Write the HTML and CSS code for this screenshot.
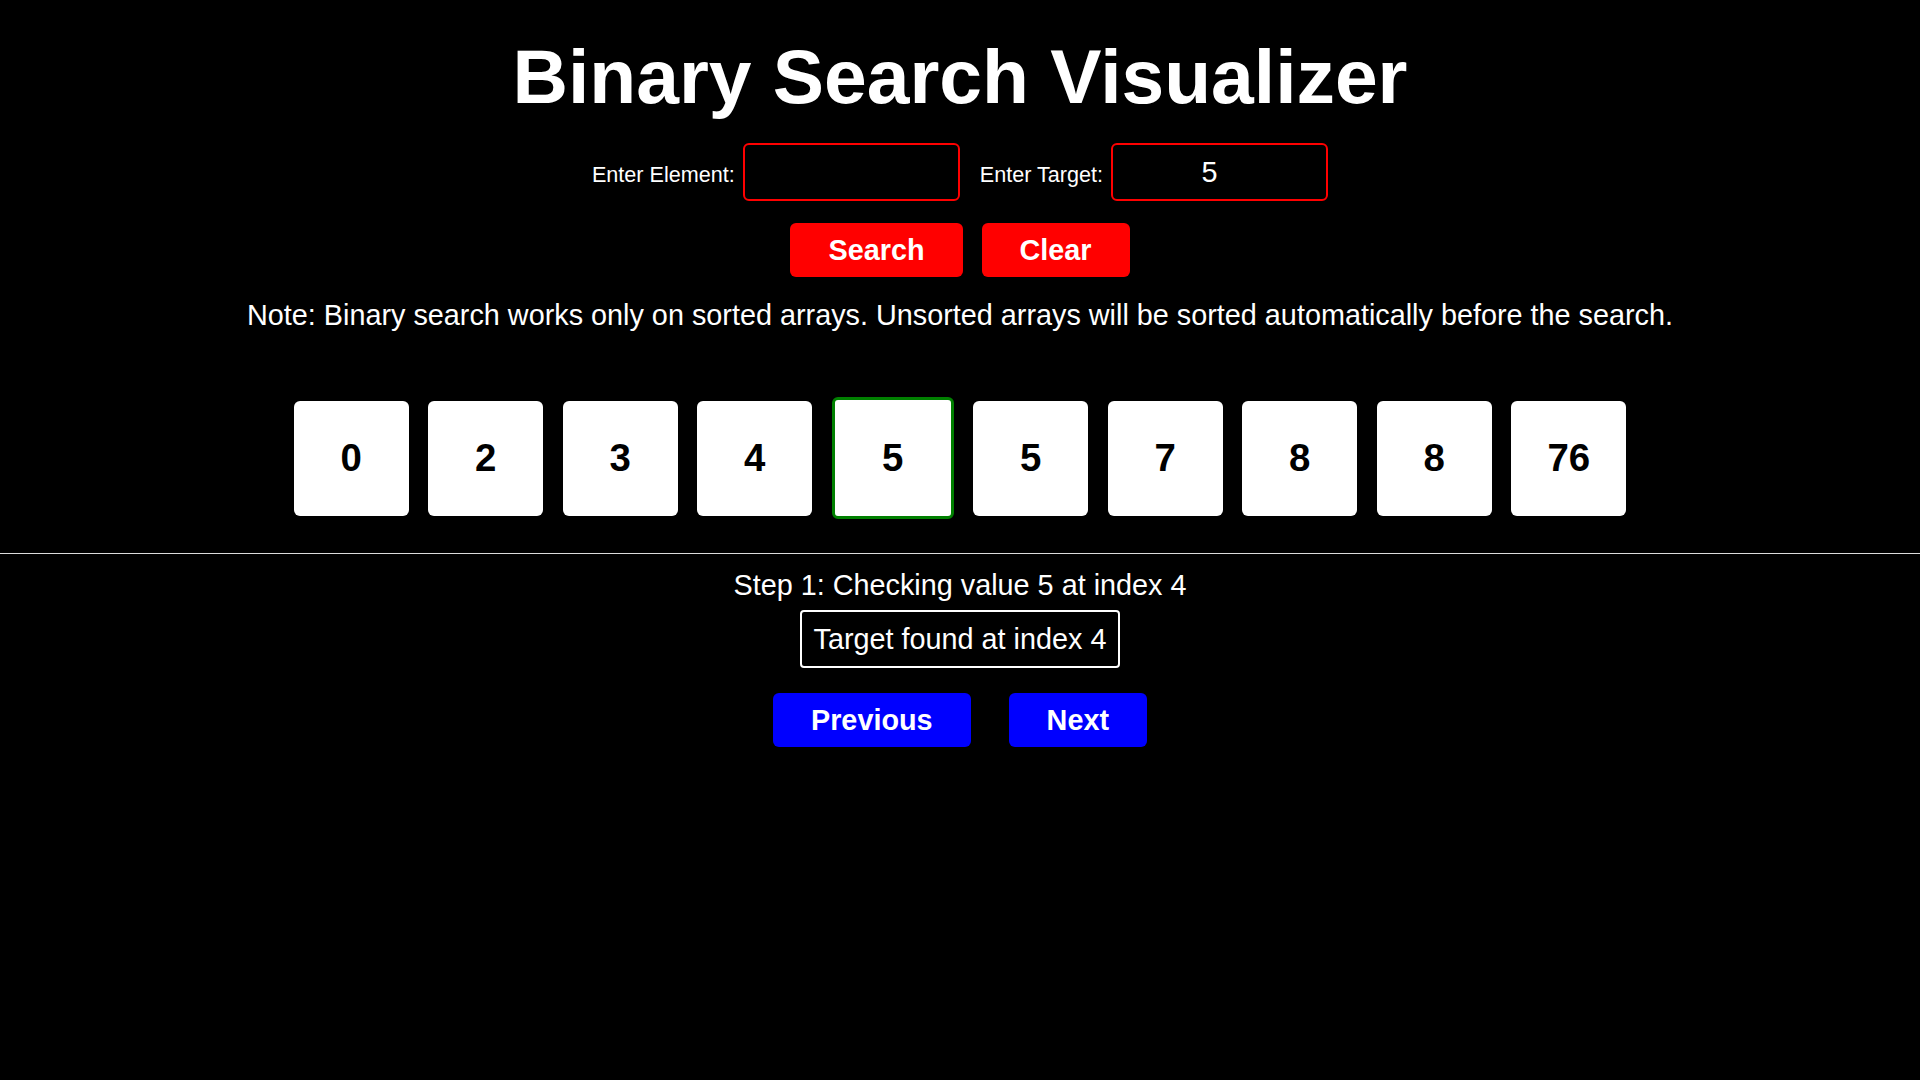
FILE: index.html
```html
<!DOCTYPE html>
<html lang="en">
<head>
<meta charset="utf-8">
<title>Binary Search Visualizer</title>
<link rel="stylesheet" href="styles.css">
</head>
<body>
<main class="app">
  <h1 class="title">Binary Search Visualizer</h1>
  <div class="inputs">
    <label class="field">
      <span class="field-label">Enter Element:</span>
      <input class="field-input" type="text" value="">
    </label>
    <label class="field">
      <span class="field-label">Enter Target:</span>
      <input class="field-input" type="text" value="5">
    </label>
  </div>
  <div class="actions">
    <button class="btn btn-red">Search</button>
    <button class="btn btn-red">Clear</button>
  </div>
  <p class="note">Note: Binary search works only on sorted arrays. Unsorted arrays will be sorted automatically before the search.</p>
  <div class="array">
    <div class="cell">0</div>
    <div class="cell">2</div>
    <div class="cell">3</div>
    <div class="cell">4</div>
    <div class="cell cell-found">5</div>
    <div class="cell">5</div>
    <div class="cell">7</div>
    <div class="cell">8</div>
    <div class="cell">8</div>
    <div class="cell">76</div>
  </div>
  <hr class="divider">
  <p class="step">Step 1: Checking value 5 at index 4</p>
  <div class="result">Target found at index 4</div>
  <div class="nav">
    <button class="btn btn-blue">Previous</button>
    <button class="btn btn-blue">Next</button>
  </div>
</main>
</body>
</html>
```
FILE: styles.css
```css
html, body {
  margin: 0;
  padding: 0;
  background: #000;
  color: #fff;
  font-family: "Liberation Sans", Arial, sans-serif;
}

.app {
  display: flex;
  flex-direction: column;
  align-items: center;
  min-height: 1080px;
}

.title {
  margin: 32px 0 0;
  font-size: 76.8px;
  line-height: 88px;
  font-weight: bold;
}

.inputs {
  margin-top: 23px;
  display: flex;
  align-items: baseline;
  gap: 20px;
}

.field {
  display: flex;
  align-items: baseline;
  gap: 8px;
}

.field-label {
  font-size: 21.6px;
}

.field-input {
  box-sizing: border-box;
  width: 217px;
  height: 58px;
  border: 2px solid #ff0000;
  border-radius: 6px;
  background: #000;
  color: #fff;
  font-family: "Liberation Sans", Arial, sans-serif;
  font-size: 28.8px;
  text-align: center;
  padding: 0 20px 0 0;
  outline: none;
}

.actions {
  margin-top: 22px;
  display: flex;
  gap: 19px;
}

.btn {
  border: none;
  border-radius: 6px;
  color: #fff;
  font-family: "Liberation Sans", Arial, sans-serif;
  font-weight: bold;
  font-size: 28.8px;
  line-height: 34px;
  padding: 10px 38px;
  cursor: pointer;
}

.btn-red {
  background: #ff0000;
}

.btn-blue {
  background: #0000ff;
}

.note {
  margin: 22px 0 0;
  font-size: 28.8px;
  line-height: 33px;
}

.array {
  margin-top: 65px;
  display: flex;
  align-items: center;
  gap: 19.5px;
  height: 122px;
}

.cell {
  width: 115px;
  height: 115px;
  background: #fff;
  color: #000;
  border-radius: 6px;
  display: flex;
  align-items: center;
  justify-content: center;
  font-weight: bold;
  font-size: 38.4px;
}

.cell-found {
  width: 116px;
  height: 116px;
  border: 3px solid #008000;
}

.divider {
  align-self: stretch;
  margin: 34px 0 0;
  border: none;
  height: 1px;
  background: #dcdcdc;
}

.step {
  margin: 15px 0 0;
  font-size: 28.8px;
  line-height: 33px;
}

.result {
  margin-top: 8px;
  border: 2px solid #fff;
  border-radius: 4px;
  padding: 10px 12px;
  font-size: 28.8px;
  line-height: 34px;
}

.nav {
  margin-top: 25px;
  display: flex;
  gap: 38px;
}
```
